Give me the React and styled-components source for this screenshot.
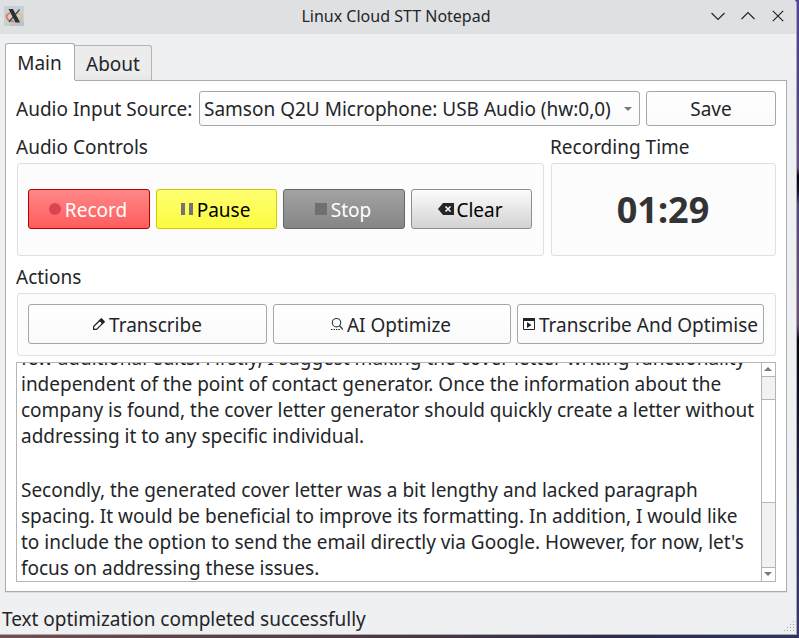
import React from 'react';
import styled, { createGlobalStyle, css } from 'styled-components';

const GlobalStyle = createGlobalStyle`
  * { box-sizing: border-box; }
  html, body { margin: 0; padding: 0; overflow: hidden; }
  body { font-family: 'Noto Sans', sans-serif; font-size: 19px; color: #232629; }
  button { font: inherit; margin: 0; }
  svg { display: block; flex: none; }
`;

const Desktop = styled.div`
  width: 799px;
  height: 638px;
  padding: 0 2px 3px 0;
  background:
    linear-gradient(90deg, #754d50 0, #5b4148 25%, #4c3940 50%, #2b2c50 78%, #303462 100%) 0 100% / 100% 3px no-repeat,
    linear-gradient(180deg, #5241a0 0, #534585 90px, #62507f 168px, #05020d 176px, #17112e 192px, #54487d 205px, #6a527c 305px, #68506f 325px, #08060f 340px, #101027 400px, #303060 520px, #393b70 638px);
`;

const Window = styled.main`
  display: flex;
  flex-direction: column;
  width: 797px;
  height: 635px;
  background: #eff0f1;
  border-right: 1px solid #a7a9ab;
  border-bottom: 1px solid #a7a9ab;
  border-top-right-radius: 4px;
  overflow: hidden;
`;

const TitleBar = styled.header`
  display: grid;
  grid-template-columns: 101px 1fr 99px;
  align-items: center;
  flex: none;
  height: 34px;
  padding: 0 10px 2px 4px;
  background: #dee0e2;
`;

const Title = styled.h1`
  margin: 0;
  font-size: 16px;
  line-height: 22px;
  font-weight: 400;
  text-align: center;
`;

const WindowButtons = styled.div`
  display: flex;
  justify-content: flex-end;
  gap: 14px;
`;

const Tabs = styled.nav`
  display: flex;
  align-items: flex-end;
  flex: none;
  height: 47px;
  padding: 0 5px;
  margin-bottom: -1px;
`;

const Tab = styled.button`
  display: flex;
  align-items: center;
  justify-content: center;
  padding: 1px 0 0;
  border: 1px solid #b4b5b6;
  border-radius: 3px 3px 0 0;
  color: inherit;
  line-height: 26px;
  ${(p) => p.$active
    ? css`
        width: 70px;
        height: 38px;
        padding-right: 1px;
        background: #fff;
        border-color: #a9abac;
        border-bottom-color: #fff;
      `
    : css`
        width: 77px;
        height: 36px;
        border-left: 0;
        border-bottom-color: #a9abac;
        border-radius: 0 3px 0 0;
        background: linear-gradient(#ececec 85%, #e6e6e6);
      `}
`;

const Pane = styled.section`
  display: flex;
  flex-direction: column;
  flex: none;
  width: 782px;
  height: 512px;
  margin-left: 5px;
  padding: 11px 10px 9px;
  border: 1px solid #a9abac;
  border-top: 0;
  box-shadow: 0 1px 0 #dcddde;
  background: linear-gradient(#a9abac, #a9abac) 69px 0 / 712px 1px no-repeat, #fff;
`;

const SourceRow = styled.div`
  display: flex;
  align-items: center;
  height: 35px;
`;

const Label = styled.span`
  width: 183px;
  padding-top: 1px;
  line-height: 26px;
  white-space: nowrap;
`;

const buttonFace = css`
  border: 1px solid #a5a6a8;
  border-radius: 3px;
  background: linear-gradient(#fff, #fafafa);
  color: #232629;
  white-space: nowrap;
`;

const Select = styled.button`
  ${buttonFace}
  display: flex;
  align-items: center;
  justify-content: space-between;
  width: 441px;
  height: 35px;
  padding: 0 7px 0 4px;
  margin-right: 6px;
`;

const SaveButton = styled.button`
  ${buttonFace}
  width: 130px;
  height: 35px;
  padding: 0;
`;

const Groups = styled.div`
  display: grid;
  grid-template-columns: 528px 226px;
  column-gap: 6px;
`;

const Group = styled.section`
  display: flex;
  flex-direction: column;
`;

const GroupTitle = styled.h2`
  margin: 0;
  height: 37px;
  padding-top: 8px;
  font-size: inherit;
  font-weight: 400;
  line-height: 26px;
`;

const Frame = styled.div`
  display: flex;
  align-items: center;
  gap: 6px;
  height: ${(p) => p.$height}px;
  margin-left: 1px;
  padding: 0 10px 1px;
  border: 1px solid #e0e0e0;
  border-radius: 3px;
  background: #fcfcfc;
`;

const tones = {
  record: css`background: linear-gradient(#ff8888, #ff5c5c); border-color: #b50000; color: #fff;`,
  pause: css`background: linear-gradient(#ffff70, #fbfb40); border-color: #cccc00; color: #000;`,
  stop: css`background: linear-gradient(#a3a3a3, #858585); border-color: #666; color: #fff;`,
  clear: css`background: linear-gradient(#fcfcfc, #d2d2d2); border-color: #8e8e8e; color: #000;`,
};

const ActionButton = styled.button`
  ${buttonFace}
  display: flex;
  align-items: center;
  justify-content: center;
  gap: ${(p) => p.$gap ?? 4}px;
  width: ${(p) => p.$width}px;
  height: 40px;
  flex: none;
  padding: 2px ${(p) => p.$shift ?? 0}px 0 0;
  line-height: 26px;
  ${(p) => tones[p.$tone]}
`;

const Timer = styled.div`
  flex: 1;
  padding: 2px 1px 0 0;
  text-align: center;
  color: #333;
  font-size: 36px;
  font-weight: 700;
  line-height: 48px;
`;

const Editor = styled.div`
  display: flex;
  width: 760px;
  height: 220px;
  margin-top: 6px;
  border: 1px solid #b4b5b6;
  overflow: hidden;
`;

const Transcript = styled.div`
  flex: 1;
  min-width: 0;
  height: 218px;
  padding-left: 4px;
  display: flex;
  flex-direction: column;
  justify-content: flex-end;
  overflow: hidden;
  letter-spacing: -0.012px;
`;

const Line = styled.div`
  flex: none;
  height: ${(p) => (p.$blank ? 28 : 26)}px;
  line-height: 26px;
  white-space: pre;
`;

const ScrollBar = styled.div`
  display: grid;
  grid-template-rows: 14px 23px 103px 65px 13px;
  width: 14px;
  border-left: 1px solid #b4b5b6;
`;

const ScrollPart = styled.div`
  display: flex;
  align-items: center;
  justify-content: center;
  padding: 0 1px 1px 0;
  background: ${(p) => (p.$track ? '#f2f2f2' : '#fff')};
  border-bottom: ${(p) => (p.$last ? '0' : '1px solid #b4b5b6')};
`;

const StatusBar = styled.footer`
  display: flex;
  align-items: flex-end;
  justify-content: space-between;
  flex: 1;
  padding: 0 2px 1px;
`;

const StatusText = styled.span`
  line-height: 26px;
  padding-bottom: 1px;
  letter-spacing: -0.012px;
`;

const AppIcon = () => (
  <svg width="20" height="20" viewBox="0 0 20 20">
    <rect width="20" height="20" rx="1" fill="#c9d0d5" />
    <path d="M5 19L14 10L20 16V20H5Z" fill="#bcc4c9" />
    <path d="M6 7C2.500 8 1.500 10.500 3.500 13C5 14.700 7 15.500 10 15.500" fill="none" stroke="#ed6a3c" strokeWidth="1.700" />
    <path d="M13 7C17.500 7.500 19 10 17 13C15.700 14.700 13 15.500 10 15.500" fill="none" stroke="#e9b56f" strokeWidth="1.400" />
    <path d="M15.500 3.500L5 16" stroke="#41464b" strokeWidth="1.200" />
    <path d="M4.500 3H9L16 16.500H11.500Z" fill="#2b3034" />
  </svg>
);

const WindowGlyph = ({ d }) => (
  <svg width="16" height="16" viewBox="0 0 16 16" fill="none" stroke="#232629" strokeWidth="1.200">
    <path d={d} />
  </svg>
);

const Triangle = ({ up }) => (
  <svg width="8" height="4" viewBox="0 0 8 4">
    <path d={up ? 'M0 4L4 0L8 4Z' : 'M0 0H8L4 4Z'} fill="#77797b" />
  </svg>
);

const RecordIcon = () => (
  <svg width="12" height="14" viewBox="0 0 12 14"><circle cx="6" cy="6" r="6" fill="#da4453" /></svg>
);

const PauseIcon = () => (
  <svg width="12" height="14" viewBox="0 0 12 14"><path d="M0 0H4V12H0ZM8 0H12V12H8Z" fill="#737373" /></svg>
);

const StopIcon = () => (
  <svg width="12" height="14" viewBox="0 0 12 14"><path d="M0 0H12V12H0Z" fill="#707070" /></svg>
);

const ClearIcon = () => (
  <svg width="16" height="14" viewBox="0 0 16 14">
    <path d="M0 6L5 0H16V12H5Z" fill="#232629" />
    <path d="M7.500 3.500L12.500 8.500M12.500 3.500L7.500 8.500" stroke="#fff" strokeWidth="1.500" />
  </svg>
);

const PencilIcon = () => (
  <svg width="12" height="14" viewBox="0 0 12 14">
    <path d="M.6 8.500L8 1.200L10.900 4.200L3.500 11.400H.6Z" fill="none" stroke="#232629" strokeWidth="1.200" />
    <path d="M5 3.500L8.500 0L12 3.500L9 6.500L7.500 3.800ZM0 9.500L2.500 12H0Z" fill="#232629" />
  </svg>
);

const SearchIcon = () => (
  <svg width="12" height="14" viewBox="0 0 12 14">
    <circle cx="5.500" cy="4.700" r="4.200" fill="none" stroke="#33363a" strokeWidth="1.100" />
    <path d="M8.300 7.500L12 11.500" stroke="#33363a" strokeWidth="1.200" />
    <path d="M0 11.500H9" stroke="#232629" strokeWidth="1.200" strokeDasharray="1.400 1.100" />
  </svg>
);

const RunIcon = () => (
  <svg width="12" height="14" viewBox="0 0 12 14">
    <path d="M.5 .5H11.500V11.500H.5Z" fill="#fff" stroke="#232629" />
    <path d="M0 0H12V3H0ZM4 4L8.500 7L4 10Z" fill="#232629" />
  </svg>
);

const gripDots = [[9, 0], [6, 3], [9, 3], [3, 6], [6, 6], [9, 6], [0, 9], [3, 9], [6, 9], [9, 9]];

const SizeGrip = () => (
  <svg width="10" height="12" viewBox="0 0 10 12">
    {gripDots.map(([x, y]) => <rect key={`${x}-${y}`} x={x} y={y} width="1" height="1" fill="#a5a7a9" />)}
  </svg>
);

const lines = [
  'few additional edits. Firstly, I suggest making the cover letter writing functionality',
  'independent of the point of contact generator. Once the information about the',
  'company is found, the cover letter generator should quickly create a letter without',
  'addressing it to any specific individual.',
  '',
  'Secondly, the generated cover letter was a bit lengthy and lacked paragraph',
  'spacing. It would be beneficial to improve its formatting. In addition, I would like',
  "to include the option to send the email directly via Google. However, for now, let's",
  'focus on addressing these issues.',
];

export default function App() {
  return (
    <Desktop>
      <GlobalStyle />
      <Window>
        <TitleBar>
          <AppIcon />
          <Title>Linux Cloud STT Notepad</Title>
          <WindowButtons>
            <WindowGlyph d="M1.500 5L8 11.500L14.500 5" />
            <WindowGlyph d="M1.500 11L8 4.500L14.500 11" />
            <WindowGlyph d="M2.800 2.800L13.200 13.200M13.200 2.800L2.800 13.200" />
          </WindowButtons>
        </TitleBar>
        <Tabs>
          <Tab $active>Main</Tab>
          <Tab>About</Tab>
        </Tabs>
        <Pane>
          <SourceRow>
            <Label>Audio Input Source:</Label>
            <Select>
              <span>Samson Q2U Microphone: USB Audio (hw:0,0)</span>
              <Triangle />
            </Select>
            <SaveButton>Save</SaveButton>
          </SourceRow>
          <Groups>
            <Group>
              <GroupTitle>Audio Controls</GroupTitle>
              <Frame $height={93}>
                <ActionButton $tone="record" $width={122} $shift={2}><RecordIcon />Record</ActionButton>
                <ActionButton $tone="pause" $width={121} $shift={2}><PauseIcon />Pause</ActionButton>
                <ActionButton $tone="stop" $width={122} $shift={2}><StopIcon />Stop</ActionButton>
                <ActionButton $tone="clear" $width={121} $gap={2} $shift={2}><ClearIcon />Clear</ActionButton>
              </Frame>
            </Group>
            <Group>
              <GroupTitle>Recording Time</GroupTitle>
              <Frame $height={93}><Timer>01:29</Timer></Frame>
            </Group>
          </Groups>
          <Group>
            <GroupTitle>Actions</GroupTitle>
            <Frame $height={63}>
              <ActionButton $width={239}><PencilIcon />Transcribe</ActionButton>
              <ActionButton $width={238} $shift={2}><SearchIcon />AI Optimize</ActionButton>
              <ActionButton $width={247}><RunIcon />Transcribe And Optimise</ActionButton>
            </Frame>
          </Group>
          <Editor>
            <Transcript>
              {lines.map((text, i) => <Line key={i} $blank={!text}>{text}</Line>)}
            </Transcript>
            <ScrollBar>
              <ScrollPart><Triangle up /></ScrollPart>
              <ScrollPart $track />
              <ScrollPart />
              <ScrollPart $track />
              <ScrollPart $last><Triangle /></ScrollPart>
            </ScrollBar>
          </Editor>
        </Pane>
        <StatusBar>
          <StatusText>Text optimization completed successfully</StatusText>
          <SizeGrip />
        </StatusBar>
      </Window>
    </Desktop>
  );
}
